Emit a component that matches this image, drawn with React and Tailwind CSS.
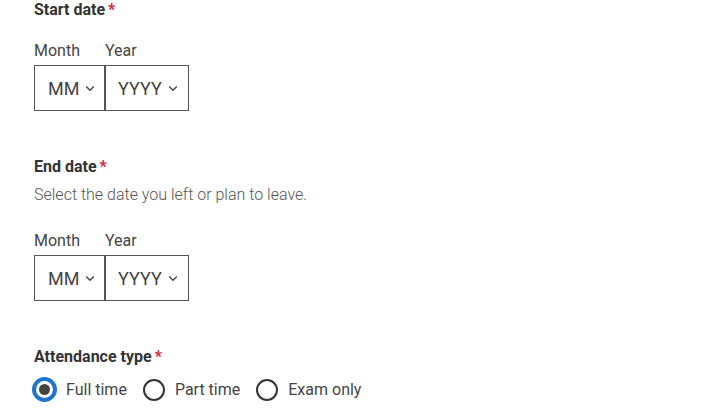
import { useState } from 'react'

const Chevron = () => (
  <svg width="10" height="7" viewBox="0 0 10 7" className="ml-[6px] mt-[1px]" fill="none">
    <path d="M1.2 1.5 L5 5.2 L8.8 1.5" stroke="#444" strokeWidth="1.4" />
  </svg>
)

function Label({ children, className = '' }) {
  return (
    <div className={`text-[16px] font-bold text-[#333] leading-[20px] ${className}`}>
      {children}
      <span className="text-[#d4213d] ml-[3px]">*</span>
    </div>
  )
}

function DatePicker({ className = '' }) {
  return (
    <div className={`flex ${className}`}>
      <div className="flex flex-col">
        <span className="text-[16px] leading-6 text-[#444] mb-[2px]">Month</span>
        <button className="w-[71px] h-[46px] border border-[#555] bg-white flex items-center pl-[13px] text-[18px] text-[#444]">
          MM
          <Chevron />
        </button>
      </div>
      <div className="flex flex-col">
        <span className="text-[16px] leading-6 text-[#444] mb-[2px]">Year</span>
        <button className="w-[84px] h-[46px] border border-[#555] bg-white flex items-center pl-[12px] text-[18px] text-[#444]">
          YYYY
          <Chevron />
        </button>
      </div>
    </div>
  )
}

function Radio({ label, checked, onClick }) {
  return (
    <button onClick={onClick} className="flex items-center mr-[15px]">
      {checked ? (
        <span className="w-[25px] h-[25px] rounded-full border-[4px] border-[#1f74d0] flex items-center justify-center">
          <span className="w-[11px] h-[11px] rounded-full bg-[#444]" />
        </span>
      ) : (
        <span className="w-[22px] h-[22px] mx-[1px] rounded-full border-2 border-[#333]" />
      )}
      <span className="ml-[9px] text-[16px] leading-6 text-[#444]">{label}</span>
    </button>
  )
}

export default function App() {
  const [type, setType] = useState('full')

  return (
    <div className="bg-white w-[716px] h-[419px] pl-[34px] pt-0 overflow-hidden" style={{ fontFamily: 'Roboto, "Noto Sans", sans-serif' }}>
      <Label>Start date</Label>
      <DatePicker className="mt-[19px]" />

      <Label className="mt-[46px]">End date</Label>
      <p className="mt-[6px] text-[16px] leading-6 text-[#555] font-light">Select the date you left or plan to leave.</p>
      <DatePicker className="mt-[22px]" />

      <Label className="mt-[46px]">Attendance type</Label>
      <div className="flex items-center mt-[10px] -ml-[2px]">
        <Radio label="Full time" checked={type === 'full'} onClick={() => setType('full')} />
        <Radio label="Part time" checked={type === 'part'} onClick={() => setType('part')} />
        <Radio label="Exam only" checked={type === 'exam'} onClick={() => setType('exam')} />
      </div>
    </div>
  )
}
